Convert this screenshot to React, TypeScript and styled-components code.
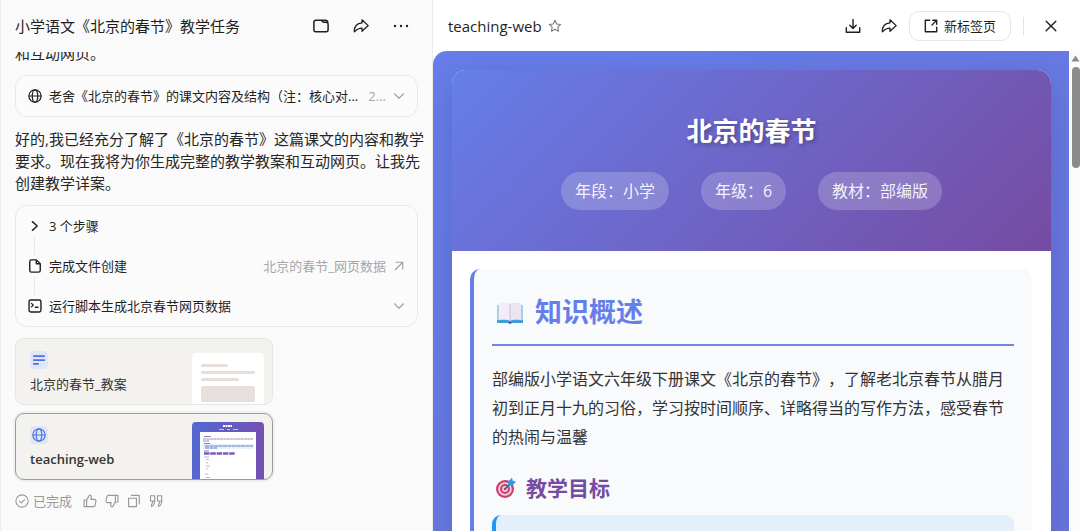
import React from "react";
import styled, { createGlobalStyle } from "styled-components";

const Global = createGlobalStyle`
  *, *::before, *::after { box-sizing: border-box; }
  body {
    margin: 0;
    background: #fff;
    color: #1f1f1f;
    font-family: "Open Sans", "Noto Sans CJK SC", sans-serif;
    text-spacing-trim: space-all;
  }
  h1, h2, h3, p { margin: 0; }
  button { font: inherit; color: inherit; background: none; border: 0; padding: 0; cursor: pointer; }
`;

const Layout = styled.div`
  display: grid;
  grid-template-columns: minmax(0, 433fr) minmax(0, 647fr);
  height: 100vh;
  overflow: hidden;
`;

/* ---------- chat column ---------- */

const Chat = styled.section`
  display: flex;
  flex-direction: column;
  min-height: 0;
  background: #fafafa;
  border-left: 1px solid #ececec;
  border-right: 1px solid #ececec;
`;

const ChatHeader = styled.header`
  display: flex;
  align-items: center;
  justify-content: space-between;
  flex: none;
  height: 52px;
  padding: 0 23px 0 14px;
`;

const ChatTitle = styled.h1`
  font-size: 15px;
  line-height: 22px;
  font-weight: 400;
  white-space: nowrap;
`;

const Tools = styled.div<{ $gap: number }>`
  display: flex;
  align-items: center;
  gap: ${(p) => p.$gap}px;
`;

const IconButton = styled.button`
  display: flex;
  flex: none;
  align-items: center;
  justify-content: center;
`;

const Messages = styled.main`
  display: flex;
  flex-direction: column;
  justify-content: flex-end;
  flex: 1;
  min-height: 0;
  overflow: hidden;
  gap: 11px;
  padding: 0 14px 20px;
  & > * { flex: none; }
`;

const Message = styled.p`
  font-size: 15px;
  line-height: 22px;
  color: #262626;
  white-space: nowrap;
`;

const StepCard = styled.div`
  display: flex;
  flex-direction: column;
  border: 1px solid #e8e8e8;
  border-radius: 12px;
  background: #fbfbfb;
`;

const Step = styled.button`
  position: relative;
  display: flex;
  align-items: center;
  gap: 7px;
  height: 40px;
  padding: 0 12px;
  font-size: 13px;
  line-height: 18px;
  text-align: left;
  & > svg { flex: none; }
  & + &::before {
    content: "";
    position: absolute;
    left: 18px;
    top: -9px;
    height: 18px;
    border-left: 1px solid #e8e8e8;
  }
`;

const StepLabel = styled.span`
  flex: 1;
  min-width: 0;
  overflow: hidden;
  text-overflow: ellipsis;
  white-space: nowrap;
`;

const StepNote = styled.span`
  color: #a6a6a6;
  white-space: nowrap;
`;

const Files = styled.div`
  display: flex;
  flex-direction: column;
  gap: 8px;
  width: 258px;
`;

const FileCard = styled.button<{ $active?: boolean }>`
  display: flex;
  justify-content: space-between;
  height: 67px;
  padding: 0 8px 0 14px;
  border: 1px solid ${(p) => (p.$active ? "#9c9c9c" : "#e6e5e2")};
  border-radius: 9px;
  background: #f3f2ef;
  overflow: hidden;
  text-align: left;
  box-shadow: ${(p) => (p.$active ? "0 0 0 2px #f0f0f0" : "none")};
`;

const FileInfo = styled.div`
  display: flex;
  flex-direction: column;
  gap: 5px;
  padding-top: 12px;
`;

const FileBadge = styled.span`
  display: flex;
  align-items: center;
  justify-content: center;
  width: 18px;
  height: 18px;
  border-radius: 4px;
  background: #e0e6f4;
`;

const FileName = styled.span<{ $strong?: boolean }>`
  font-size: 13px;
  line-height: 20px;
  font-weight: ${(p) => (p.$strong ? 600 : 400)};
  color: #333;
`;

const Thumb = styled.svg<{ $top: number }>`
  display: block;
  margin-top: ${(p) => p.$top}px;
`;

const Status = styled.footer`
  display: flex;
  align-items: center;
  gap: 8px;
  height: 20px;
  color: #999;
  font-size: 13px;
  line-height: 18px;
`;

const Done = styled.span`
  display: flex;
  align-items: center;
  gap: 4px;
  margin-right: 3px;
`;

/* ---------- preview column ---------- */

const Preview = styled.section`
  display: flex;
  flex-direction: column;
  min-height: 0;
  background: #fff;
`;

const PreviewHeader = styled.header`
  display: flex;
  align-items: center;
  justify-content: space-between;
  flex: none;
  height: 51px;
  padding: 0 22px 0 15px;
`;

const PreviewTitle = styled.h2`
  display: flex;
  align-items: center;
  gap: 6px;
  font-size: 15px;
  line-height: 22px;
  font-weight: 400;
`;

const NewTab = styled.button`
  display: flex;
  align-items: center;
  gap: 6px;
  height: 30px;
  padding: 0 14px;
  border: 1px solid #e6e6e6;
  border-radius: 10px;
  font-size: 13px;
  line-height: 18px;
  white-space: nowrap;
`;

const Divider = styled.span`
  width: 1px;
  height: 18px;
  background: #e3e3e3;
  margin-right: 8px;
`;

const Viewport = styled.div`
  display: flex;
  flex: 1;
  min-height: 0;
`;

const Page = styled.div`
  flex: 1;
  min-width: 0;
  overflow: hidden;
  padding: 19px 18px 0 19px;
  border-top-left-radius: 14px;
  background: linear-gradient(135deg, #667eea 0%, #764ba2 100%) 0 0 / 100% 6000px no-repeat;
`;

const Scrollbar = styled.div`
  display: flex;
  flex-direction: column;
  align-items: flex-end;
  gap: 5px;
  width: 11px;
  padding-top: 4px;
  background: #fcfcfc;
`;

const ScrollThumb = styled.div`
  width: 8px;
  height: 101px;
  border-radius: 4px;
  background: #8b8b8b;
`;

const Lesson = styled.article`
  border-radius: 14px;
  background: #fff;
  box-shadow: 0 10px 36px rgba(0, 0, 0, 0.14);
  overflow: hidden;
`;

const Hero = styled.div`
  display: flex;
  flex-direction: column;
  align-items: center;
  gap: 20px;
  padding: 40px 20px 41px;
  background: linear-gradient(135deg, #667eea 0%, #764ba2 100%);
  color: #fff;
`;

const HeroTitle = styled.h1`
  font-size: 26px;
  line-height: 42px;
  font-weight: 700;
  text-shadow: 2px 2px 4px rgba(0, 0, 0, 0.3);
`;

const Tags = styled.div`
  display: flex;
  justify-content: center;
  gap: 32px;
`;

const Tag = styled.span`
  padding: 0 14px;
  border-radius: 19px;
  background: rgba(255, 255, 255, 0.2);
  color: rgba(255, 255, 255, 0.92);
  font-size: 16px;
  line-height: 38px;
`;

const Body = styled.div`
  padding: 18px 19px 0 18px;
`;

const Topic = styled.section`
  min-height: 800px;
  padding: 18px;
  border-left: 4px solid #667eea;
  border-radius: 10px;
  background: #f8fafc;
`;

const TopicTitle = styled.h2`
  display: flex;
  align-items: center;
  gap: 11px;
  padding: 0 0 7px 4px;
  border-bottom: 2px solid #6f84e4;
  color: #667eea;
  font-size: 27px;
  line-height: 50px;
`;

const TopicText = styled.p`
  margin-top: 19px;
  color: #333;
  font-size: 16px;
  line-height: 29px;
`;

const GoalTitle = styled.h3`
  display: flex;
  align-items: center;
  gap: 9px;
  margin-top: 19px;
  padding-left: 3px;
  color: #764ba2;
  font-size: 21px;
  line-height: 34px;
`;

const Goals = styled.div`
  min-height: 120px;
  margin-top: 10px;
  border-left: 4px solid #2196f3;
  border-radius: 9px;
  background: #e3f0fc;
`;

/* ---------- icons ---------- */

type IconProps = { size?: number; color?: string; width?: number; children: React.ReactNode };

const Icon = ({ size = 16, color = "currentColor", width = 1.3, children }: IconProps) => (
  <svg
    width={size}
    height={size}
    viewBox="0 0 16 16"
    fill="none"
    stroke={color}
    strokeWidth={width}
    strokeLinecap="round"
    strokeLinejoin="round"
    aria-hidden="true"
  >
    {children}
  </svg>
);

const ShareIcon = () => (
  <Icon>
    <path d="M9 1.8 15.200 7.600 9 13.200V10.200C6.200 10 4.200 11.200 1.400 13.800.9 8.600 3.900 5.200 9 4.900z" />
  </Icon>
);

const GlobeIcon = ({ size = 14, color, width = 1.4 }: { size?: number; color?: string; width?: number }) => (
  <Icon size={size} color={color} width={width}>
    <circle cx="8" cy="8" r="7" />
    <ellipse cx="8" cy="8" rx="3.1" ry="7" />
    <path d="M1 8h14" />
  </Icon>
);

const ChevronDown = () => (
  <Icon size={12} color="#a0a0a0" width={1.5}>
    <path d="m2 5 6 6 6-6" />
  </Icon>
);

const ThumbShape = () => (
  <path d="M1.2 6.8h3v7.6h-3zM4.2 7 7.4 1.2c1.5 0 2.3.9 2.1 2.3L9 6.2h4.2c1.1 0 1.8.8 1.6 1.8l-1 5c-.2.9-.8 1.4-1.6 1.4h-8" />
);

const BookIcon = () => (
  <svg width="28" height="26" viewBox="0 0 28 26" aria-hidden="true">
    <path d="M1 6h26v18H16l-2 1-2-1H1z" fill="#3f9ddb" />
    <path d="M1 6h1.500v15H1zM25.500 6H27v15h-1.500z" fill="#9fd0ec" />
    <path d="M2.500 4.500c4-1 8.500-1 11.500.2v17c-3-1.100-7.500-1.100-11.500-.4z" fill="#f3ebf5" />
    <path d="M25.500 4.500c-4-1-8.500-1-11.500.2v17c3-1.100 7.500-1.100 11.500-.4z" fill="#ede4f2" />
    <path d="M14 4.700v17" stroke="#cdbfd8" strokeWidth="1" />
    <path d="M12 23h4l-2 2z" fill="#1c62a5" />
  </svg>
);

const TargetIcon = () => (
  <svg width="22" height="22" viewBox="0 0 22 22" aria-hidden="true">
    <circle cx="10" cy="12" r="9" fill="#cf3f6c" />
    <circle cx="10" cy="12" r="6.800" fill="#efd3e0" />
    <circle cx="10" cy="12" r="5" fill="#cf3f6c" />
    <circle cx="10" cy="12" r="2.900" fill="#efd3e0" />
    <circle cx="10" cy="12" r="1.300" fill="#cf3f6c" />
    <path d="m10 12 6-6" stroke="#22608f" strokeWidth="1.300" />
    <path d="M13 8.500 13.200 4.500 17 .8l.8 3 3.200.8-3.500 3.800z" fill="#2f9be6" />
  </svg>
);

const DocThumb = () => (
  <Thumb $top={14} width="72" height="52" viewBox="0 0 72 52" aria-hidden="true">
    <rect width="72" height="60" rx="4" fill="#fff" />
    <g fill="#e6dfdc">
      <rect x="9" y="11" width="27" height="3" rx="1.500" />
      <rect x="9" y="18" width="54" height="3" rx="1.500" />
      <rect x="9" y="25" width="38" height="3" rx="1.500" />
      <rect x="9" y="33" width="54" height="16" rx="2" />
    </g>
  </Thumb>
);

const WebThumb = () => (
  <Thumb $top={8} width="72" height="58" viewBox="0 0 72 58" aria-hidden="true">
    <defs>
      <linearGradient id="web-thumb" x1="0" y1="0" x2="1" y2="0">
        <stop offset="0" stopColor="#5468cf" />
        <stop offset="1" stopColor="#7450b4" />
      </linearGradient>
    </defs>
    <rect width="72" height="66" rx="4" fill="url(#web-thumb)" />
    <rect x="8" y="10" width="56" height="48" fill="#fff" />
    <path d="M31 4h9" stroke="#fff" strokeWidth="2" strokeDasharray="2 .5" />
    <path d="M27 7.500h5M35 7.500h3M41 7.500h5" stroke="#c9c4ee" />
    <rect x="10" y="22" width="52" height="5" fill="#e6f2fc" />
    <path d="M12 14.500h7M12 21.500h6M12 29h5" stroke="#8a7ccd" />
    <path d="M11 17h50M11 19h6" stroke="#8d93a6" strokeDasharray="3 .4" />
    <path d="M13 24h48M13 26h12" stroke="#5f7fae" strokeDasharray="4 .5" />
    <path d="M12 31.500h31" stroke="#7a5cc0" strokeWidth="2.500" strokeDasharray="5.500 .8" />
    <path d="M12 35h5M14 37.500h3M14 41h2M14 44h4M14 47h2M13 52h3M14 55.500h4" stroke="#b9b9c6" />
  </Thumb>
);

/* ---------- page ---------- */

export default function App() {
  return (
    <>
      <Global />
      <Layout>
        <Chat>
          <ChatHeader>
            <ChatTitle>小学语文《北京的春节》教学任务</ChatTitle>
            <Tools $gap={24}>
              <IconButton aria-label="文件夹">
                <Icon width={1.5}>
                  <path d="M.9 4.200c0-1.200.8-2 2-2H8l2.300 2h2.800c1.200 0 2 .8 2 2v5.600c0 1.200-.8 2-2 2H2.900c-1.200 0-2-.8-2-2zM8 2.200h4.500c1 0 1.900.5 2.300 1.600" />
                </Icon>
              </IconButton>
              <IconButton aria-label="分享"><ShareIcon /></IconButton>
              <IconButton aria-label="更多">
                <Icon color="none">
                  <g fill="#1f1f1f">
                    <circle cx="2" cy="8" r="1.200" />
                    <circle cx="8" cy="8" r="1.200" />
                    <circle cx="14" cy="8" r="1.200" />
                  </g>
                </Icon>
              </IconButton>
            </Tools>
          </ChatHeader>

          <Messages>
            <Message>和互动网页。</Message>
            <StepCard>
              <Step>
                <GlobeIcon />
                <StepLabel>老舍《北京的春节》的课文内容及结构（注：核心对...</StepLabel>
                <StepNote>2...</StepNote>
                <ChevronDown />
              </Step>
            </StepCard>
            <Message>
              好的,我已经充分了解了《北京的春节》这篇课文的内容和教学
              <br />
              要求。现在我将为你生成完整的教学教案和互动网页。让我先
              <br />
              创建教学详案。
            </Message>
            <StepCard>
              <Step>
                <Icon size={14} width={1.6}><path d="m5 3 5.500 5L5 13" /></Icon>
                <StepLabel>3 个步骤</StepLabel>
              </Step>
              <Step>
                <Icon size={14} width={1.6}>
                  <path d="M4 1h5.500L14 5.500V13c0 1.200-.8 2-2 2H4c-1.200 0-2-.8-2-2V3c0-1.200.8-2 2-2zM9.500 1v4.500H14" />
                </Icon>
                <StepLabel>完成文件创建</StepLabel>
                <StepNote>北京的春节_网页数据</StepNote>
                <Icon size={12} color="#a0a0a0" width={1.5}><path d="M3 13 13 3M4 3h9v9" /></Icon>
              </Step>
              <Step>
                <Icon size={14} width={1.6}>
                  <rect x="1.200" y="1.200" width="13.600" height="13.600" rx="2" />
                  <path d="m4 5 2 2-2 2M8.500 9.500h3" />
                </Icon>
                <StepLabel>运行脚本生成北京春节网页数据</StepLabel>
                <ChevronDown />
              </Step>
            </StepCard>
            <Files>
              <FileCard>
                <FileInfo>
                  <FileBadge>
                    <Icon size={14} color="#4a74e8" width={2}><path d="M2 3.500h12M2 8h12M2 12.500h5" /></Icon>
                  </FileBadge>
                  <FileName>北京的春节_教案</FileName>
                </FileInfo>
                <DocThumb />
              </FileCard>
              <FileCard $active>
                <FileInfo>
                  <FileBadge><GlobeIcon color="#4a74e8" /></FileBadge>
                  <FileName $strong>teaching-web</FileName>
                </FileInfo>
                <WebThumb />
              </FileCard>
            </Files>
            <Status>
              <Done>
                <Icon size={14} width={1.2}><circle cx="8" cy="8" r="7" /><path d="m5.200 8.200 2 2 3.800-3.800" /></Icon>
                已完成
              </Done>
              <IconButton aria-label="赞"><Icon size={14}><ThumbShape /></Icon></IconButton>
              <IconButton aria-label="踩">
                <Icon size={14}><g transform="rotate(180 8 8)"><ThumbShape /></g></Icon>
              </IconButton>
              <IconButton aria-label="复制">
                <Icon size={14}><path d="M1.800 4.800h9v9.600h-9zM5 1.600h9v9.800" /></Icon>
              </IconButton>
              <IconButton aria-label="引用">
                <Icon size={14}>
                  <path d="M6.500 2H1.700v6h4.800zM6.500 8c0 3-1 5.200-3.600 6.200v-2.400c1-.8 1.300-2 1.300-3.800M14.500 2H9.700v6h4.800zM14.500 8c0 3-1 5.200-3.600 6.200v-2.400c1-.8 1.300-2 1.300-3.800" />
                </Icon>
              </IconButton>
            </Status>
          </Messages>
        </Chat>

        <Preview>
          <PreviewHeader>
            <PreviewTitle>
              teaching-web
              <IconButton aria-label="收藏">
                <Icon size={14} color="#777" width={1.2}>
                  <path d="m8 1.500 2 4.100 4.500.6-3.300 3.200.8 4.500L8 11.800l-4 2.100.8-4.500L1.500 6.200 6 5.600z" />
                </Icon>
              </IconButton>
            </PreviewTitle>
            <Tools $gap={12}>
              <Tools $gap={20}>
                <IconButton aria-label="下载">
                  <Icon width={1.4}><path d="M8 1.500v8.700M4.800 7.200 8 10.400l3.200-3.200M1.300 9.800v4.400h13.400V9.800" /></Icon>
                </IconButton>
                <IconButton aria-label="分享"><ShareIcon /></IconButton>
              </Tools>
              <NewTab>
                <Icon size={14} width={1.6}>
                  <path d="M6.500 1.500h-5v13h13v-5M10 1.500h4.500V6M14.500 1.500 9 7" />
                </Icon>
                新标签页
              </NewTab>
              <Divider />
              <IconButton aria-label="关闭">
                <Icon size={14} width={1.600}><path d="m2.500 2.500 11 11M13.500 2.500l-11 11" /></Icon>
              </IconButton>
            </Tools>
          </PreviewHeader>

          <Viewport>
            <Page>
              <Lesson>
                <Hero>
                  <HeroTitle>北京的春节</HeroTitle>
                  <Tags>
                    <Tag>年段：小学</Tag>
                    <Tag>年级：6</Tag>
                    <Tag>教材：部编版</Tag>
                  </Tags>
                </Hero>
                <Body>
                  <Topic>
                    <TopicTitle><BookIcon />知识概述</TopicTitle>
                    <TopicText>
                      部编版小学语文六年级下册课文《北京的春节》，了解老北京春节从腊月初到正月十九的习俗，学习按时间顺序、详略得当的写作方法，感受春节的热闹与温馨
                    </TopicText>
                    <GoalTitle><TargetIcon />教学目标</GoalTitle>
                    <Goals />
                  </Topic>
                </Body>
              </Lesson>
            </Page>
            <Scrollbar>
              <svg width="9" height="7" viewBox="0 0 9 7" aria-hidden="true">
                <path d="M4.500.5 8.500 6.500h-8z" fill="#8b8b8b" />
              </svg>
              <ScrollThumb />
            </Scrollbar>
          </Viewport>
        </Preview>
      </Layout>
    </>
  );
}
